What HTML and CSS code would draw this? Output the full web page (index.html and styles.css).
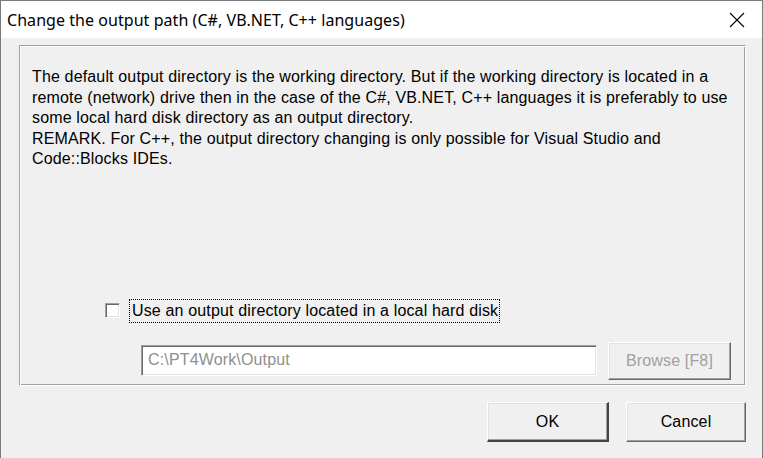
FILE: index.html
```html
<!DOCTYPE html>
<html>
<head>
<meta charset="utf-8">
<link rel="stylesheet" href="styles.css">
</head>
<body>
<div class="window">
  <div class="titlebar">
    <span class="title">Change the output path (C#, VB.NET, C++ languages)</span>
    <svg class="close" width="16" height="16" viewBox="0 0 16 16"><path d="M1 1 L15 15 M15 1 L1 15" stroke="#000" stroke-width="1.1" fill="none"/></svg>
  </div>
  <div class="client">
    <div class="frame">
      <p class="info">The default output directory is the working directory. But if the working directory is located in a<br>remote (network) drive then in the case of the C#, VB.NET, C++ languages it is preferably to use<br>some local hard disk directory as an output directory.<br>REMARK. For C++, the output directory changing is only possible for Visual Studio and<br>Code::Blocks IDEs.</p>
      <div class="check-row">
        <span class="checkbox"></span>
        <span class="check-label">Use an output directory located in a local hard disk</span>
      </div>
      <div class="path-row">
        <div class="path-field">C:\PT4Work\Output</div>
        <div class="btn btn-disabled browse">Browse [F8]</div>
      </div>
    </div>
    <div class="buttons">
      <div class="btn btn-default">OK</div>
      <div class="btn">Cancel</div>
    </div>
  </div>
</div>
</body>
</html>
```

FILE: styles.css
```css
* { box-sizing: border-box; }
html, body { margin: 0; padding: 0; }
body { width: 763px; height: 458px; overflow: hidden; background: #f0f0f0; }
.window {
  width: 763px; height: 458px;
  border: 1px solid #7a7a7a;
  border-bottom: none;
  background: #f0f0f0;
  display: flex; flex-direction: column;
}
.titlebar {
  height: 37px; background: #fff;
  display: flex; align-items: center; justify-content: space-between;
  padding: 0 17px 0 6px;
}
.title {
  font-family: "Noto Sans", sans-serif; font-size: 16px; color: #000;
  letter-spacing: 0.05px;
}
.close { display: block; }
.client {
  flex: 1;
  padding: 7px 16px 0 18px;
  display: flex; flex-direction: column;
  font-family: "Liberation Sans", Arial, sans-serif; font-size: 16px; color: #000;
  letter-spacing: 0.15px;
}
.frame {
  width: 727px; height: 341px;
  border-top: 1px solid #a0a0a0; border-left: 1px solid #a0a0a0;
  border-right: 1px solid #fff; border-bottom: 1px solid #fff;
  box-shadow: inset 1px 1px 0 #fff, inset -1px -1px 0 #a0a0a0;
  padding: 21px 12px 0 12px;
  display: flex; flex-direction: column;
}
.info { margin: 0; line-height: 20.5px; white-space: nowrap; }
.check-row {
  margin-top: 130px;
  display: flex; align-items: center;
  padding-left: 73px;
  height: 22px;
}
.checkbox {
  flex-shrink: 0;
  width: 15px; height: 15px; background: #fff;
  border-top: 1px solid #a0a0a0; border-left: 1px solid #a0a0a0;
  border-right: 1px solid #fff; border-bottom: 1px solid #fff;
  box-shadow: inset 1px 1px 0 #696969, inset -1px -1px 0 #e3e3e3;
  margin-right: 10px;
}
.check-label {
  outline: 1px dotted #000; outline-offset: 0;
  padding: 2px 1px 2px 2px; line-height: 18px;
}
.path-row {
  margin-top: 20px;
  display: flex; align-items: center;
  padding-left: 109px;
}
.path-field {
  flex-shrink: 0;
  width: 456px; height: 31px; background: #fff;
  border-top: 1px solid #a0a0a0; border-left: 1px solid #a0a0a0;
  border-right: 1px solid #fff; border-bottom: 1px solid #fff;
  box-shadow: inset 1px 1px 0 #696969, inset -1px -1px 0 #e3e3e3;
  color: #8f8f8f; padding: 5px 0 0 6px; line-height: 18px;
  margin-right: 11px;
}
.btn {
  flex-shrink: 0;
  display: flex; align-items: center; justify-content: center;
  width: 120px; height: 40px;
  background: #f0f0f0;
  border-top: 1px solid #fff; border-left: 1px solid #fff;
  border-right: 1px solid #696969; border-bottom: 1px solid #696969;
  box-shadow: inset -1px -1px 0 #a0a0a0, inset 1px 1px 0 #e3e3e3;
  color: #000;
}
.browse { width: 123px; height: 38px; }
.btn-disabled { color: #a0a0a0; }
.btn-default {
  border-right: 2px solid #444; border-bottom: 2px solid #444;
  width: 122px;
}
.buttons {
  margin-top: 16px;
  display: flex; justify-content: flex-end; gap: 17px;
}
```
